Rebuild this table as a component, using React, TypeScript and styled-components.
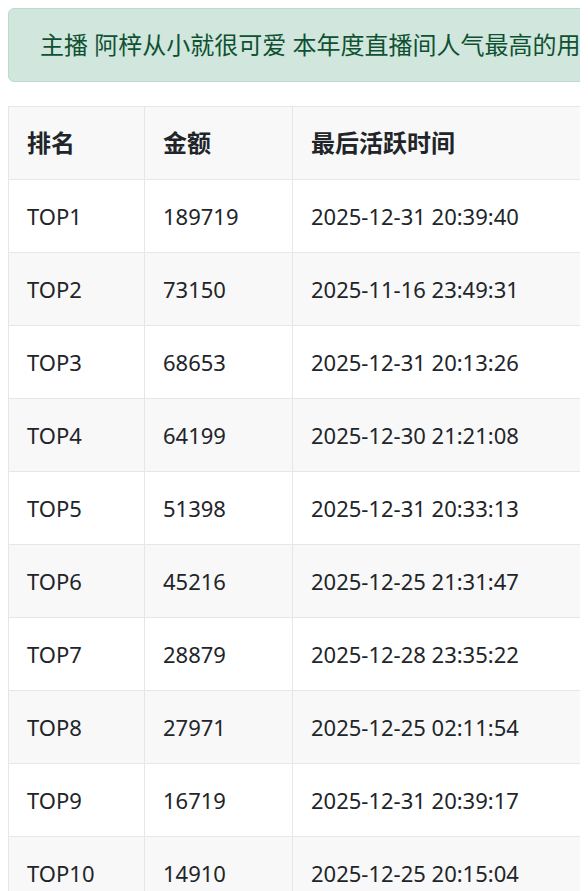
import styled, { createGlobalStyle } from 'styled-components';

const GlobalStyle = createGlobalStyle`
  html, body {
    overflow: hidden;
  }
  body {
    margin: 8px;
    font-family: 'Noto Sans', 'Noto Sans CJK SC', sans-serif;
    color: #212529;
    background: #fff;
  }
`;

const Page = styled.div`
  width: 1100px;
`;

const Alert = styled.div`
  background-color: #d1e7dd;
  border: 1px solid #badbcc;
  border-radius: 6px;
  color: #0f5132;
  font-size: 24px;
  line-height: 34px;
  padding: 19px 31px;
  margin-bottom: 24px;
  white-space: nowrap;
`;

const Table = styled.table`
  border-collapse: collapse;
  table-layout: fixed;
  width: 1000px;
`;

const Row = styled.tr<{ striped: boolean }>`
  background-color: ${props => (props.striped ? '#f8f8f8' : '#fff')};
`;

const HeadCell = styled.th<{ w?: number }>`
  box-sizing: border-box;
  width: ${props => (props.w ? `${props.w}px` : 'auto')};
  border: 1px solid #e3e6ea;
  padding: 19px 19px 19px 18px;
  font-size: 24px;
  line-height: 34px;
  text-align: left;
  font-weight: 700;
  white-space: nowrap;
`;

const Cell = styled.td`
  border: 1px solid #e3e6ea;
  padding: 19px 19px 19px 18px;
  font-size: 22px;
  line-height: 34px;
  white-space: nowrap;
`;

const rows = [
  ['189719', '2025-12-31 20:39:40'],
  ['73150', '2025-11-16 23:49:31'],
  ['68653', '2025-12-31 20:13:26'],
  ['64199', '2025-12-30 21:21:08'],
  ['51398', '2025-12-31 20:33:13'],
  ['45216', '2025-12-25 21:31:47'],
  ['28879', '2025-12-28 23:35:22'],
  ['27971', '2025-12-25 02:11:54'],
  ['16719', '2025-12-31 20:39:17'],
  ['14910', '2025-12-25 20:15:04'],
];

export default function App() {
  return (
    <Page>
      <GlobalStyle />
      <Alert>主播 阿梓从小就很可爱 本年度直播间人气最高的用户排行榜</Alert>
      <Table>
        <thead>
          <Row striped>
            <HeadCell w={136}>排名</HeadCell>
            <HeadCell w={148}>金额</HeadCell>
            <HeadCell>最后活跃时间</HeadCell>
          </Row>
        </thead>
        <tbody>
          {rows.map(([amount, time], i) => (
            <Row key={i} striped={i % 2 === 1}>
              <Cell>TOP{i + 1}</Cell>
              <Cell>{amount}</Cell>
              <Cell>{time}</Cell>
            </Row>
          ))}
        </tbody>
      </Table>
    </Page>
  );
}
